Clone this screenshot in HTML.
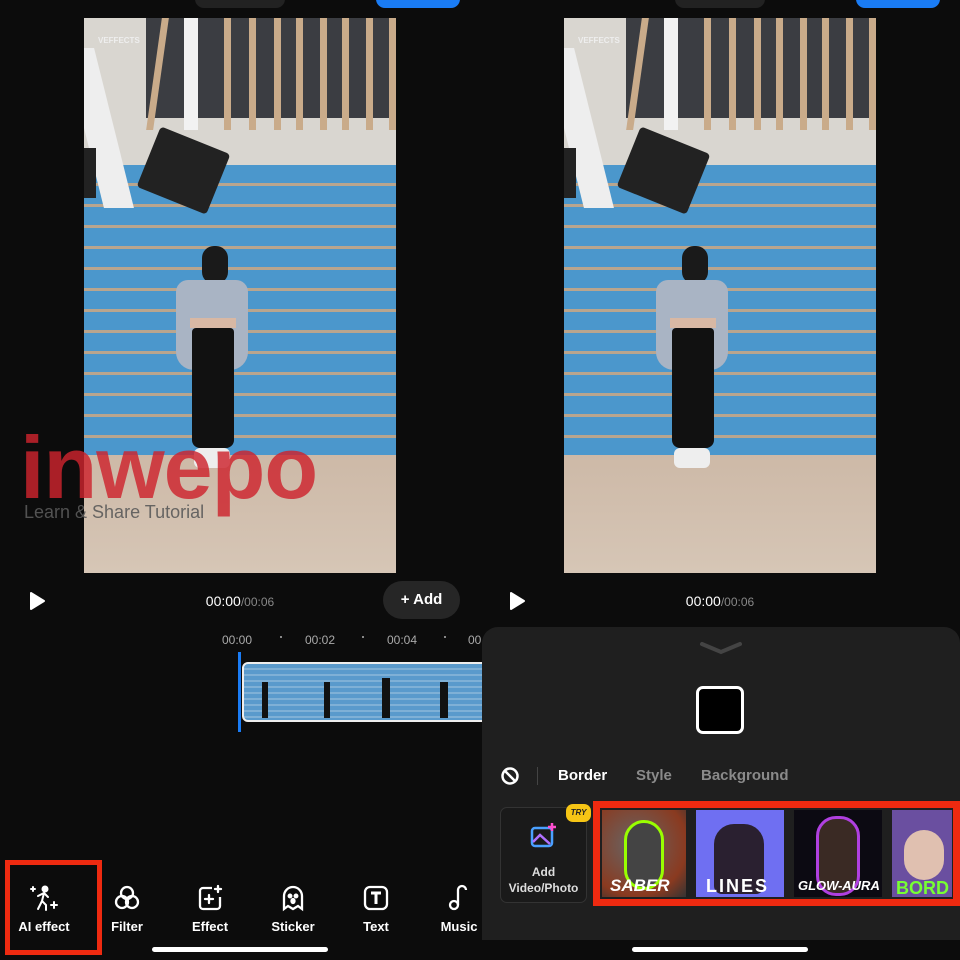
<!DOCTYPE html>
<html><head><meta charset="utf-8"><style>
*{margin:0;padding:0;box-sizing:border-box}
body{width:960px;height:960px;background:#0c0c0c;position:relative;overflow:hidden;font-family:"Liberation Sans",sans-serif;color:#fff}
.a{position:absolute}
.frame{position:absolute;top:18px;width:312px;height:555px;overflow:hidden;background:#4b97cc}
.ceil{position:absolute;left:0;top:0;width:312px;height:147px;background:#d9d6d0}
.dark{position:absolute;left:62px;top:0;width:250px;height:100px;background:#3b3d42}
.slat{position:absolute;top:0;width:7px;height:112px;background:#c9ab8a}
.wall{position:absolute;left:0;top:147px;width:312px;height:290px;background:repeating-linear-gradient(#4b97cc 0 18px,#b9a58e 18px 21px)}
.floor{position:absolute;left:0;top:437px;width:312px;height:118px;background:linear-gradient(#cdb9a7,#d6c6b6)}
.tool{position:absolute;top:884px;width:80px;text-align:center;font-size:13px;font-weight:bold}
.tool svg{display:block;margin:0 auto 7px}
</style></head><body>

<div class="a" style="left:195px;top:-10px;width:90px;height:18px;background:#222;border-radius:9px"></div>
<div class="a" style="left:376px;top:-10px;width:84px;height:18px;background:#1a7cf5;border-radius:9px"></div>
<div class="a" style="left:675px;top:-10px;width:90px;height:18px;background:#222;border-radius:9px"></div>
<div class="a" style="left:856px;top:-10px;width:84px;height:18px;background:#1a7cf5;border-radius:9px"></div>

<div class="frame" style="left:84px">
 <div class="ceil"></div><div class="dark"></div>
 <div class="slat" style="left:70px;transform:skewX(-8deg)"></div><div class="slat" style="left:100px;width:14px;background:#f2f2f2"></div><div class="slat" style="left:140px"></div><div class="slat" style="left:165px"></div><div class="slat" style="left:190px"></div><div class="slat" style="left:212px"></div><div class="slat" style="left:236px"></div><div class="slat" style="left:258px"></div><div class="slat" style="left:282px"></div><div class="slat" style="left:305px"></div>
 <div class="wall"></div><div class="floor"></div>
 <div class="a" style="left:0;top:30px;width:30px;height:160px;background:#eee;transform:skewX(14deg)"></div>
 <div class="a" style="left:62px;top:120px;width:75px;height:65px;background:#222;transform:rotate(22deg);border-radius:4px"></div>
 <div class="a" style="left:0;top:130px;width:12px;height:50px;background:#222"></div>
 <div class="a" style="left:118px;top:228px;width:26px;height:38px;background:#1a1a1a;border-radius:12px"></div>
 <div class="a" style="left:92px;top:262px;width:72px;height:90px;background:#a9b4c4;border-radius:12px 12px 18px 18px"></div>
 <div class="a" style="left:106px;top:300px;width:46px;height:10px;background:#d8b8a4"></div>
 <div class="a" style="left:108px;top:310px;width:42px;height:120px;background:#111;border-radius:4px 4px 8px 8px"></div>
 <div class="a" style="left:110px;top:430px;width:36px;height:20px;background:#eee;border-radius:6px"></div>
 <div class="a" style="left:14px;top:18px;font-size:8px;font-weight:bold;color:#eee">VEFFECTS</div>
</div>
<div class="frame" style="left:564px">
 <div class="ceil"></div><div class="dark"></div>
 <div class="slat" style="left:70px;transform:skewX(-8deg)"></div><div class="slat" style="left:100px;width:14px;background:#f2f2f2"></div><div class="slat" style="left:140px"></div><div class="slat" style="left:165px"></div><div class="slat" style="left:190px"></div><div class="slat" style="left:212px"></div><div class="slat" style="left:236px"></div><div class="slat" style="left:258px"></div><div class="slat" style="left:282px"></div><div class="slat" style="left:305px"></div>
 <div class="wall"></div><div class="floor"></div>
 <div class="a" style="left:0;top:30px;width:30px;height:160px;background:#eee;transform:skewX(14deg)"></div>
 <div class="a" style="left:62px;top:120px;width:75px;height:65px;background:#222;transform:rotate(22deg);border-radius:4px"></div>
 <div class="a" style="left:0;top:130px;width:12px;height:50px;background:#222"></div>
 <div class="a" style="left:118px;top:228px;width:26px;height:38px;background:#1a1a1a;border-radius:12px"></div>
 <div class="a" style="left:92px;top:262px;width:72px;height:90px;background:#a9b4c4;border-radius:12px 12px 18px 18px"></div>
 <div class="a" style="left:106px;top:300px;width:46px;height:10px;background:#d8b8a4"></div>
 <div class="a" style="left:108px;top:310px;width:42px;height:120px;background:#111;border-radius:4px 4px 8px 8px"></div>
 <div class="a" style="left:110px;top:430px;width:36px;height:20px;background:#eee;border-radius:6px"></div>
 <div class="a" style="left:14px;top:18px;font-size:8px;font-weight:bold;color:#eee">VEFFECTS</div>
</div>

<div class="a" style="left:20px;top:424px;font-size:88px;font-weight:bold;color:rgba(205,35,45,0.82);letter-spacing:-1px;line-height:1">inwepo</div>
<div class="a" style="left:24px;top:502px;font-size:18px;color:rgba(90,90,90,0.9)">Learn &amp; Share Tutorial</div>

<svg class="a" style="left:28px;top:591px" width="18" height="20"><path d="M3 2 L16 10 L3 18Z" fill="#fff" stroke="#fff" stroke-width="2" stroke-linejoin="round"/></svg>
<div class="a" style="left:180px;top:593px;width:120px;text-align:center;font-size:14px">00:00<span style="color:#888;font-size:12px">/00:06</span></div>
<div class="a" style="left:383px;top:581px;width:77px;height:38px;background:#262626;border-radius:19px;font-size:15px;font-weight:bold;text-align:center;line-height:38px">+ Add</div>
<svg class="a" style="left:508px;top:591px" width="18" height="20"><path d="M3 2 L16 10 L3 18Z" fill="#fff" stroke="#fff" stroke-width="2" stroke-linejoin="round"/></svg>
<div class="a" style="left:660px;top:593px;width:120px;text-align:center;font-size:14px">00:00<span style="color:#888;font-size:12px">/00:06</span></div>

<div class="a" style="top:633px;left:222px;font-size:12px;color:#aaa">00:00</div>
<div class="a" style="top:633px;left:305px;font-size:12px;color:#aaa">00:02</div>
<div class="a" style="top:633px;left:387px;font-size:12px;color:#aaa">00:04</div>
<div class="a" style="top:633px;left:468px;font-size:12px;color:#aaa">00</div>
<div class="a" style="top:636px;left:280px;width:2px;height:2px;background:#888"></div>
<div class="a" style="top:636px;left:362px;width:2px;height:2px;background:#888"></div>
<div class="a" style="top:636px;left:444px;width:2px;height:2px;background:#888"></div>
<div class="a" style="left:242px;top:662px;width:250px;height:60px;border:2px solid #eee;border-radius:6px;background:repeating-linear-gradient(#5a9acc 0 4px,#7fb0d6 4px 6px);overflow:hidden">
 <div class="a" style="left:18px;top:18px;width:6px;height:36px;background:#111"></div>
 <div class="a" style="left:80px;top:18px;width:6px;height:36px;background:#111"></div>
 <div class="a" style="left:138px;top:14px;width:8px;height:40px;background:#111"></div>
 <div class="a" style="left:196px;top:18px;width:8px;height:36px;background:#111"></div>
</div>
<div class="a" style="left:238px;top:652px;width:3px;height:80px;background:#1a7cf5"></div>

<div class="tool" style="left:4px"><svg width="30" height="28" viewBox="0 0 30 28" fill="none" stroke="#fff" stroke-width="2" stroke-linecap="round"><circle cx="16" cy="5" r="2.5" fill="#fff"/><path d="M9 12 L15 9 L19 13 M15 9 L13 17 L17 21 L17 26 M13 17 L9 25"/><path d="M4 3 l0 4 M2 5 l4 0 M25 18 l0 6 M22 21 l6 0"/></svg>AI effect</div>
<div class="tool" style="left:87px"><svg width="28" height="28" viewBox="0 0 28 28" fill="none" stroke="#fff" stroke-width="2.3"><circle cx="14" cy="9" r="6"/><circle cx="9" cy="18" r="6"/><circle cx="19" cy="18" r="6"/></svg>Filter</div>
<div class="tool" style="left:170px"><svg width="28" height="28" viewBox="0 0 28 28" fill="none" stroke="#fff" stroke-width="2.3"><path d="M16 4 H7 a3 3 0 0 0 -3 3 V22 a3 3 0 0 0 3 3 H21 a3 3 0 0 0 3 -3 V13"/><path d="M13 11 v8 M9 15 h8 M22 2 v6 M19 5 h6" stroke-linecap="round"/></svg>Effect</div>
<div class="tool" style="left:253px"><svg width="28" height="28" viewBox="0 0 28 28" fill="none" stroke="#fff" stroke-width="2.3"><path d="M5 25 V12 a9 9 0 0 1 18 0 V25 L19 22 L14 25 L9 22 Z"/><circle cx="11" cy="12" r="1.3" fill="#fff"/><circle cx="17" cy="12" r="1.3" fill="#fff"/><ellipse cx="14" cy="17" rx="1.5" ry="2" fill="#fff"/></svg>Sticker</div>
<div class="tool" style="left:336px"><svg width="28" height="28" viewBox="0 0 28 28" fill="none" stroke="#fff" stroke-width="2.3"><rect x="3" y="3" width="22" height="22" rx="5"/><path d="M9 9 H19 M14 9 V20" stroke-width="3"/></svg>Text</div>
<div class="tool" style="left:419px"><svg width="28" height="28" viewBox="0 0 28 28" fill="none" stroke="#fff" stroke-width="2.3"><circle cx="9" cy="21" r="4"/><path d="M13 21 V6 a4 4 0 0 1 8 0"/></svg>Music</div>
<div class="a" style="left:5px;top:860px;width:97px;height:95px;border:5px solid #ee2a10"></div>
<div class="a" style="left:152px;top:947px;width:176px;height:5px;background:#fff;border-radius:3px"></div>

<div class="a" style="left:482px;top:627px;width:478px;height:313px;background:#1f1f1f;border-radius:16px 16px 0 0"></div>
<svg class="a" style="left:698px;top:640px" width="46" height="16"><path d="M4 4 L23 12 L42 4" fill="none" stroke="#444" stroke-width="4" stroke-linecap="round"/></svg>
<div class="a" style="left:696px;top:686px;width:48px;height:48px;background:#000;border:3px solid #fff;border-radius:7px"></div>
<svg class="a" style="left:500px;top:766px" width="20" height="20" fill="none" stroke="#fff" stroke-width="2.5"><circle cx="10" cy="10" r="7.5"/><path d="M5 5 L15 15"/></svg>
<div class="a" style="left:537px;top:767px;width:1px;height:18px;background:#444"></div>
<div class="a" style="left:558px;top:767px;font-size:15px;font-weight:bold">Border</div>
<div class="a" style="left:636px;top:767px;font-size:15px;font-weight:bold;color:#8a8a8a">Style</div>
<div class="a" style="left:701px;top:767px;font-size:15px;font-weight:bold;color:#8a8a8a">Background</div>
<div class="a" style="left:500px;top:807px;width:87px;height:96px;border:1px solid #333;border-radius:7px;background:#1a1a1a"></div>
<svg class="a" style="left:530px;top:822px" width="28" height="28" fill="none" stroke-width="2.5"><rect x="2" y="6" width="20" height="18" rx="3" stroke="#4aa0ff"/><path d="M3 20 L10 13 L20 22" stroke="#b070ff"/><path d="M22 1 v8 M18 5 h8" stroke="#ff4fd0"/></svg>
<div class="a" style="left:500px;top:864px;width:87px;text-align:center;font-size:12px;font-weight:bold;line-height:16px;color:#ddd">Add<br>Video/Photo</div>
<div class="a" style="left:566px;top:804px;width:25px;height:18px;background:#f6c515;border-radius:7px;color:#222;font-size:8px;font-weight:bold;font-style:italic;text-align:center;line-height:18px">TRY</div>
<div class="a" style="left:602px;top:810px;width:84px;height:87px;background:radial-gradient(circle at 40% 40%,#666,#8a3a20 70%,#333);overflow:hidden"><div class="a" style="left:22px;top:10px;width:40px;height:70px;border:3px solid #9f0;border-radius:20px;background:#444"></div><div class="a" style="left:8px;top:66px;font-size:17px;font-weight:bold;font-style:italic">SABER</div></div>
<div class="a" style="left:696px;top:810px;width:88px;height:87px;background:#6f6ff2;overflow:hidden"><div class="a" style="left:18px;top:14px;width:50px;height:70px;background:#2a2030;border-radius:20px 20px 8px 8px"></div><div class="a" style="left:10px;top:66px;font-size:18px;font-weight:bold;letter-spacing:2px">LINES</div></div>
<div class="a" style="left:794px;top:810px;width:88px;height:87px;background:#0c0a12;overflow:hidden"><div class="a" style="left:22px;top:6px;width:44px;height:80px;border:3px solid #b040e0;border-radius:20px;background:#3a2a24"></div><div class="a" style="left:4px;top:68px;font-size:13px;font-weight:bold;font-style:italic;white-space:nowrap">GLOW-AURA</div></div>
<div class="a" style="left:892px;top:810px;width:60px;height:87px;background:#6a4fa0;overflow:hidden"><div class="a" style="left:12px;top:20px;width:40px;height:50px;background:#e0c0b0;border-radius:20px"></div><div class="a" style="left:4px;top:68px;font-size:18px;font-weight:bold;color:#7f3">BORD</div></div>
<div class="a" style="left:593px;top:801px;width:367px;height:105px;border:7px solid #ee2a10"></div>
<div class="a" style="left:632px;top:947px;width:176px;height:5px;background:#fff;border-radius:3px"></div>
</body></html>
